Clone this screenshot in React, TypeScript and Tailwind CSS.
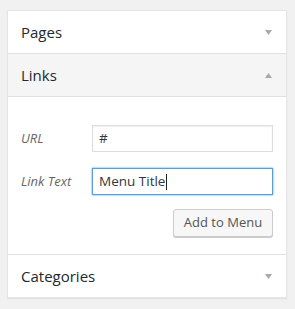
const font = { fontFamily: '"Open Sans", "Noto Sans", sans-serif' };

function Arrow({ up }: { up?: boolean }) {
  return (
    <svg width="7" height="5" viewBox="0 0 7 5" className="shrink-0">
      <path d={up ? 'M0 5 L3.5 0 L7 5 Z' : 'M0 0 L7 0 L3.5 5 Z'} fill="#a7aaad" />
    </svg>
  );
}

function Header({ title, open }: { title: string; open?: boolean }) {
  return (
    <div
      className={`flex h-[42px] items-center justify-between pl-[13px] pr-[14px] ${
        open ? 'bg-[#f5f5f5]' : 'bg-white'
      }`}
    >
      <span className="text-[15px] text-[#23282d]">{title}</span>
      <Arrow up={open} />
    </div>
  );
}

export default function App() {
  return (
    <div className="h-[309px] w-[295px] bg-[#f1f1f1] pl-[7px] pr-[8px] pt-[10px]" style={font}>
      <div className="border border-[#e5e5e5] bg-white shadow-[0_1px_1px_rgba(0,0,0,0.06)]">
        <Header title="Pages" />
        <div className="border-t border-[#dfdfdf]">
          <Header title="Links" open />
        </div>
        <div className="border-t border-[#dfdfdf] pb-[17px] pl-[13px] pr-[13px] pt-[28px]">
          <div className="flex items-center">
            <span className="w-[71px] text-[13px] italic text-[#666]">URL</span>
            <div className="flex h-[27px] flex-1 items-center border border-[#ddd] px-[6px] text-[13.5px] text-[#32373c] shadow-[inset_0_1px_2px_rgba(0,0,0,0.07)]">
              #
            </div>
          </div>
          <div className="mt-[16px] flex items-center">
            <span className="w-[71px] text-[13px] italic text-[#666]">Link Text</span>
            <div className="flex h-[27px] flex-1 items-center border border-[#5b9dd9] px-[6px] text-[13.5px] text-[#32373c] shadow-[0_0_2px_rgba(30,140,190,0.8)]">
              Menu Title
              <span className="ml-[1px] h-[16px] w-[1px] bg-[#222]" />
            </div>
          </div>
          <div className="mt-[14px] flex justify-end">
            <button className="h-[28px] w-[100px] rounded-[3px] border border-[#ccc] bg-[#f7f7f7] text-[13px] text-[#555] shadow-[0_1px_0_#ccc]">
              Add to Menu
            </button>
          </div>
        </div>
        <div className="border-t border-[#dfdfdf]">
          <Header title="Categories" />
        </div>
      </div>
    </div>
  );
}
